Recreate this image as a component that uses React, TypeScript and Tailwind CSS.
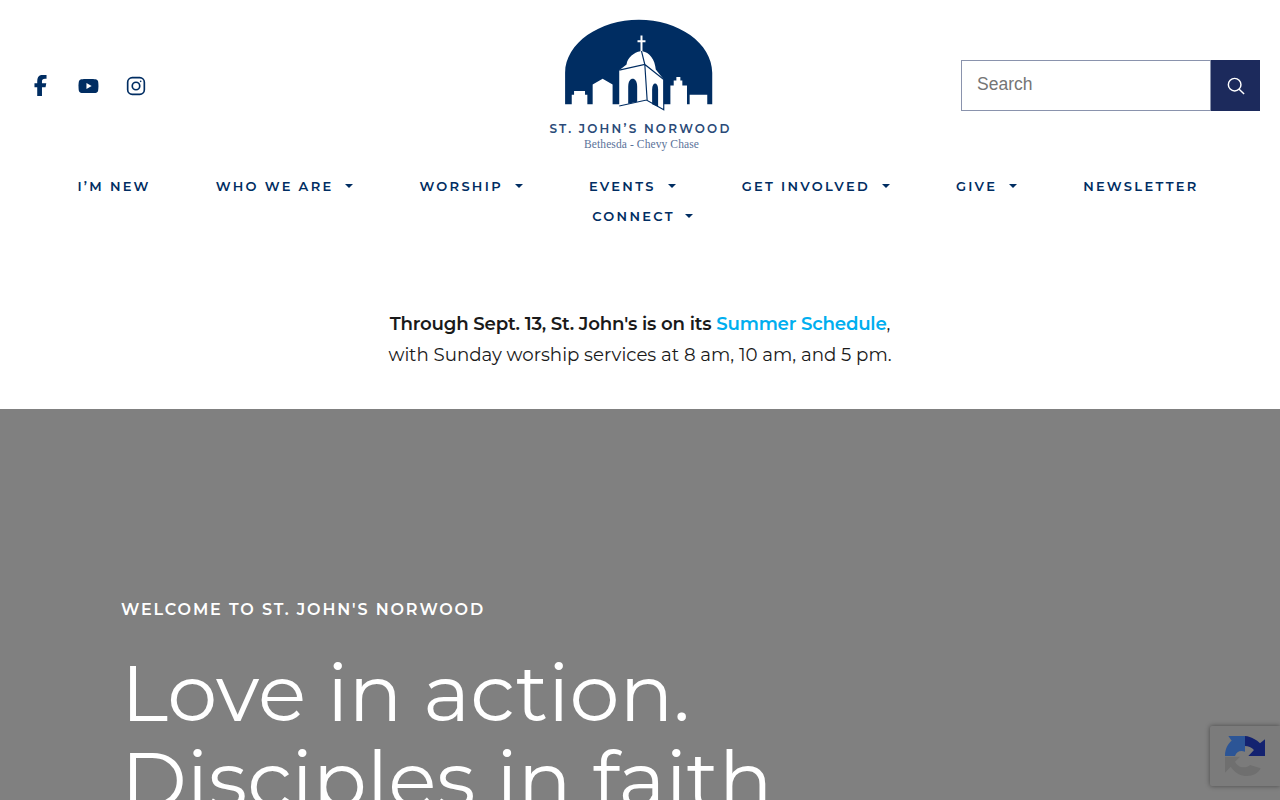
const navItems = [
  { label: "I’M NEW", caret: false },
  { label: "WHO WE ARE", caret: true },
  { label: "WORSHIP", caret: true },
  { label: "EVENTS", caret: true },
  { label: "GET INVOLVED", caret: true },
  { label: "GIVE", caret: true },
  { label: "NEWSLETTER", caret: false },
  { label: "CONNECT", caret: true },
];

function Logo() {
  return (
    <svg viewBox="100 25 455 280" className="-ml-[1.5px] w-[152px] h-[93px]">
      <path
        fill="#002d62"
        d="M105 285V190C105 100 210 30 327 30C445 30 548 100 548 190V285H533V256H480V285H472V228H458V213H452V203H440V213H432V228H422V285H402V210L378 180C376 150 358 128 338 125V98H347V92H338V78H332V92H323V98H332V125C312 128 292 145 290 165L268 182V285H248V225L218 208L188 225V285H172V256H165V245H132V256H125V285Z"
      />
      <path fill="#002d62" d="M295 283V232C295 200 322 200 322 232V277Z" />
      <path fill="#002d62" d="M367 285V240C367 216 385 216 385 240V292Z" />
      <path fill="none" stroke="#002d62" strokeWidth="3.5" d="M268 182L345 165L402 210V301L350 272L268 290M345 165L352 272M335 125L345 165" />
    </svg>
  );
}

function Social() {
  return (
    <div className="flex items-center pl-[32px] text-[#002d62]">
      <svg viewBox="0 0 320 512" className="w-[17px] h-[21px]" fill="currentColor">
        <path d="M80 299v213h116V299h87l18-100H196v-35c0-53 21-73 74-73 17 0 30 0 37 1V1C293-3 258-8 238-8 130-8 80 43 80 153v46H13v100z" />
      </svg>
      <svg viewBox="0 0 576 512" className="ml-[29px] w-[21px] h-[20px]" fill="currentColor">
        <path d="M550 124c-6-24-25-42-48-49-43-11-214-11-214-11S117 64 74 75c-23 7-42 25-48 49-12 43-12 133-12 133s0 90 12 133c6 24 25 41 48 48 43 12 214 12 214 12s171 0 214-12c23-7 42-24 48-48 12-43 12-133 12-133s0-90-12-133zM232 338V175l143 82z" />
      </svg>
      <svg viewBox="0 0 24 24" className="ml-[26.5px] w-[20px] h-[20px]" fill="none" stroke="currentColor" strokeWidth="2">
        <rect x="2" y="2" width="20" height="20" rx="5.5" />
        <circle cx="12" cy="12" r="4.5" />
        <circle cx="17.6" cy="6.4" r="1" fill="currentColor" stroke="none" />
      </svg>
    </div>
  );
}

export default function App() {
  return (
    <div className="h-[800px] overflow-hidden bg-white font-['Montserrat','Inter',sans-serif]">
      <header className="flex items-start justify-between h-[171px]">
        <div className="w-[300px] pt-[75px]">
          <Social />
        </div>
        <div className="flex flex-col items-center pt-[18px]">
          <Logo />
          <div className="mt-[11px] ml-[1px] text-[12px] leading-[14px] font-semibold tracking-[2.2px] text-[#2a4a78] whitespace-nowrap">
            ST. JOHN’S NORWOOD
          </div>
          <div className="mt-[1px] ml-[3px] font-['Liberation_Serif',serif] text-[11.5px] leading-[14px] tracking-[0.1px] text-[#5a7299]">
            Bethesda - Chevy Chase
          </div>
        </div>
        <form className="w-[300px] pt-[60px] pr-[20px] flex justify-end">
          <div className="flex h-[51px]">
            <input
              placeholder="Search"
              className="w-[250px] h-full border border-[#8a93ad] px-[15px] pb-[2px] text-[17.5px] font-['Liberation_Sans',sans-serif] placeholder:text-[#757575]"
            />
            <button type="button" className="w-[49px] h-full bg-[#1c2a5c] flex items-center justify-center">
              <svg viewBox="0 0 20 20" className="w-[18px] h-[18px]" fill="none" stroke="white" strokeWidth="1.6">
                <circle cx="8.5" cy="8.5" r="7" />
                <path d="M13.5 13.5L19 19" />
              </svg>
            </button>
          </div>
        </form>
      </header>

      <nav className="flex flex-wrap justify-center pl-[41px] pr-[45px] text-[13px] leading-[30px] font-semibold tracking-[2.3px] text-[#002d62]">
        {navItems.map((item) => {
          const last = item.label === "CONNECT";
          return (
            <a key={item.label} href="#" className={last ? "flex items-center px-[32.5px] ml-[10px]" : "flex items-center px-[32.5px]"}>
              {item.label}
              {item.caret && (
                <span
                  className={
                    last
                      ? "ml-[10px] mr-[1px] w-0 h-0 border-x-[4.5px] border-x-transparent border-t-[4.5px] border-t-[#002d62]"
                      : "ml-[12px] mr-[1px] w-0 h-0 border-x-[4.5px] border-x-transparent border-t-[4.5px] border-t-[#002d62]"
                  }
                />
              )}
            </a>
          );
        })}
      </nav>

      <section className="pt-[77px] text-center text-[18.2px] leading-[31px] text-[#1a1a1a] h-[178px]">
        <p className="font-semibold tracking-[-0.2px]">
          Through Sept. 13, St. John's is on its <a href="#" className="text-[#00aeef]">Summer Schedule</a>
          <span className="font-normal">,</span>
        </p>
        <p>with Sunday worship services at 8 am, 10 am, and 5 pm.</p>
      </section>

      <section className="bg-[#808080] h-[500px] pl-[121px] pt-[191px] text-white">
        <p className="text-[16px] leading-[20px] font-semibold tracking-[1.87px]">WELCOME TO ST. JOHN'S NORWOOD</p>
        <h1 className="mt-[29px] text-[79.7px] leading-[87px] font-normal">
          Love in action.
          <br />
          Disciples in faith
        </h1>
      </section>

      <div className="fixed left-[1210px] top-[726px] w-[70px] h-[60px] bg-[#7b7b7b] rounded-l-[2px] shadow-[0_0_5px_rgba(0,0,0,0.45)] flex items-center pl-[15px]">
        <svg viewBox="105 78 120 120" className="w-[40px] h-[40px]">
          <path fill="#2c5596" d="M105 138C105 115 115 100 125 92L115 78H165V125C150 120 140 125 135 138Z" />
          <path fill="#132270" d="M165 78C185 80 200 90 210 100L225 88V138H175L192 120C185 112 175 108 165 108Z" />
          <path fill="#6f6f6f" d="M105 140V188L122 170C135 190 155 198 170 198C190 198 205 190 212 175L180 165C175 170 170 172 160 172C150 172 140 165 135 155L150 140Z" />
        </svg>
      </div>
    </div>
  );
}
